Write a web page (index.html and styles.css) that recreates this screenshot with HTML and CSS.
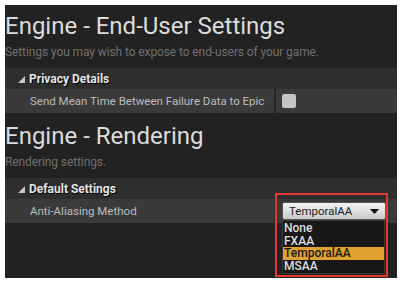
FILE: index.html
```html
<!DOCTYPE html>
<html>
	<head>
		<title>Engine settings</title>
		<link rel="stylesheet" href="styles.css">
	</head>
	<body>
		<div class="panel">
			<h1 class="title">Engine - End-User Settings</h1>
			<p class="desc">Settings you may wish to expose to end-users of your game.</p>
			<div class="category">
				<svg class="arrow" width="7" height="7" viewBox="0 0 7 7"><polygon points="7,0 7,7 0,7" fill="#c8c8c8"/></svg>
				Privacy Details
			</div>
			<div class="prop">
				<div class="name">Send Mean Time Between Failure Data to Epic</div>
				<div class="value"><span class="check"></span></div>
			</div>

			<h1 class="title second">Engine - Rendering</h1>
			<p class="desc">Rendering settings.</p>
			<div class="category">
				<svg class="arrow" width="7" height="7" viewBox="0 0 7 7"><polygon points="7,0 7,7 0,7" fill="#c8c8c8"/></svg>
				Default Settings
			</div>
			<div class="prop">
				<div class="name">Anti-Aliasing Method</div>
				<div class="value">
					<div class="combo">
						<span>TemporalAA</span>
						<svg width="9" height="5" viewBox="0 0 9 5"><polygon points="0,0 9,0 4.5,5" fill="#111"/></svg>
						<ul class="list">
							<li>None</li>
							<li>FXAA</li>
							<li class="picked">TemporalAA</li>
							<li>MSAA</li>
						</ul>
					</div>
				</div>
			</div>
			<div class="mark"></div>
		</div>
	</body>
</html>
```

FILE: styles.css
```css
body {
	margin: 0;
	background: #fff;
	font-family: Roboto, "Liberation Sans", sans-serif;
}

.panel {
	position: relative;
	margin: 5px 0 0 5px;
	width: 392px;
	height: 273px;
	background: #222;
	overflow: hidden;
}

.title {
	margin: 0;
	padding-top: 6px;
	font-size: 24px;
	font-weight: 400;
	line-height: 30px;
	color: #dcdcdc;
}

.second {
	padding-top: 8px;
}

.desc {
	margin: 3px 0 8px;
	font-size: 12px;
	line-height: 16px;
	color: #707070;
	letter-spacing: -0.1px;
}

.category {
	display: flex;
	align-items: center;
	gap: 4px;
	height: 21px;
	padding-left: 13px;
	background: #2e2e2e;
	color: #e6e6e6;
	font-size: 12px;
	font-weight: 700;
	text-shadow: 1px 1px 0 #000;
}

.arrow {
	margin-top: 1px;
}

.prop {
	display: flex;
	height: 24px;
	background: #3a3a3a;
}

.name {
	width: 244px;
	padding-left: 25px;
	border-right: 2px solid #262626;
	color: #bdbdbd;
	font-size: 11.5px;
	line-height: 24px;
}

.value {
	display: flex;
	align-items: center;
	padding-left: 6px;
}

.check {
	width: 14px;
	height: 14px;
	border-radius: 2px;
	background: #c4c4c4;
}

.combo {
	position: relative;
	display: flex;
	align-items: center;
	justify-content: space-between;
	width: 90px;
	height: 16px;
	padding: 0 6px;
	border: 1px solid #555;
	border-radius: 2px;
	background: linear-gradient(#f4f4f4, #c9c9c9);
	color: #222;
	font-size: 11.5px;
}

.list {
	position: absolute;
	top: 17px;
	left: -1px;
	width: 101px;
	margin: 0;
	padding: 1px 0;
	list-style: none;
	background: #181818;
	border: 1px solid #3c3c3c;
	color: #dedede;
	font-size: 12px;
	font-weight: 500;
	line-height: 12.5px;
}

.list li {
	padding-left: 1px;
}

.picked {
	background: #e0a12e;
	color: #1a1a1a;
}

.mark {
	position: absolute;
	left: 270px;
	top: 188px;
	width: 109px;
	height: 80px;
	border: 2px solid #e23a33;
}
```
